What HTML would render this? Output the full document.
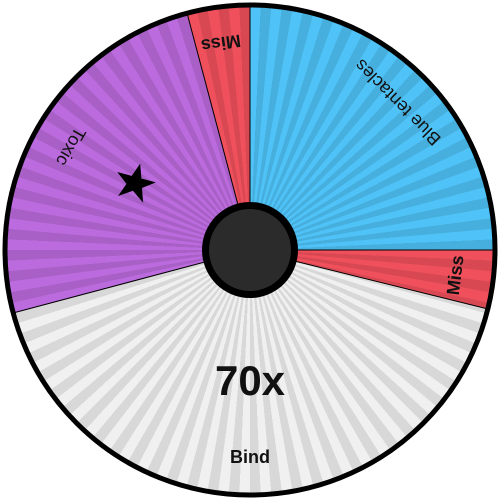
<!DOCTYPE html>
<html><head><meta charset="utf-8"><style>
html,body{margin:0;padding:0;background:#fff;width:500px;height:500px;overflow:hidden}
.w{position:absolute;left:5px;top:5px;width:490px;height:490px;border-radius:50%;
background:
repeating-conic-gradient(from 0deg at 50% 50%, rgba(0,0,0,0) 0deg 2.5deg, rgba(0,0,0,0.1) 2.5deg 5deg),
conic-gradient(from 0deg at 50% 50%, #4fc3f7 0deg 90deg, #f0505c 90deg 104deg, #f0f0f0 104deg 255deg, #bb6bdd 255deg 345deg, #f0505c 345deg 360deg);}
svg{position:absolute;left:0;top:0}
.t{font-family:"Liberation Sans",sans-serif;font-size:18px;fill:#111;text-anchor:middle;dominant-baseline:middle}
</style></head><body>
<div class="w"></div>
<svg width="500" height="500">
<g stroke="#000" stroke-width="1">
<line x1="250" y1="250" x2="250" y2="5"/>
<line x1="250" y1="250" x2="495" y2="250"/>
<line x1="250" y1="250" x2="488" y2="309"/>
<line x1="250" y1="250" x2="13" y2="313"/>
<line x1="250" y1="250" x2="187" y2="13"/>
</g>
<circle cx="250" cy="250" r="245" fill="none" stroke="#000" stroke-width="5"/>
<circle cx="250" cy="250" r="48" fill="#000"/>
<circle cx="250" cy="250" r="41" fill="#2b2b2b"/>
<g transform="translate(250 250)">
<text class="t" transform="rotate(45) translate(0 -210) rotate(180)">Blue tentacles</text>
<text class="t" font-weight="bold" transform="rotate(352) translate(0 -210) rotate(180)">Miss</text>
<text class="t" font-weight="bold" transform="rotate(97) translate(0 -208) rotate(180)">Miss</text>
<text class="t" transform="rotate(300) translate(0 -208) rotate(180)">Toxic</text>
<text class="t" font-weight="bold" transform="rotate(180) translate(0 -208) rotate(180)">Bind</text>
<text class="t" font-weight="bold" style="font-size:42px" x="0" y="134">70x</text>
</g>
<polygon fill="#000" points="135,163 140,177 155,177 143,186 148,200 135,191 122,200 127,186 115,177 130,177" transform="rotate(15 135 183)"/>
</svg>
</body></html>
